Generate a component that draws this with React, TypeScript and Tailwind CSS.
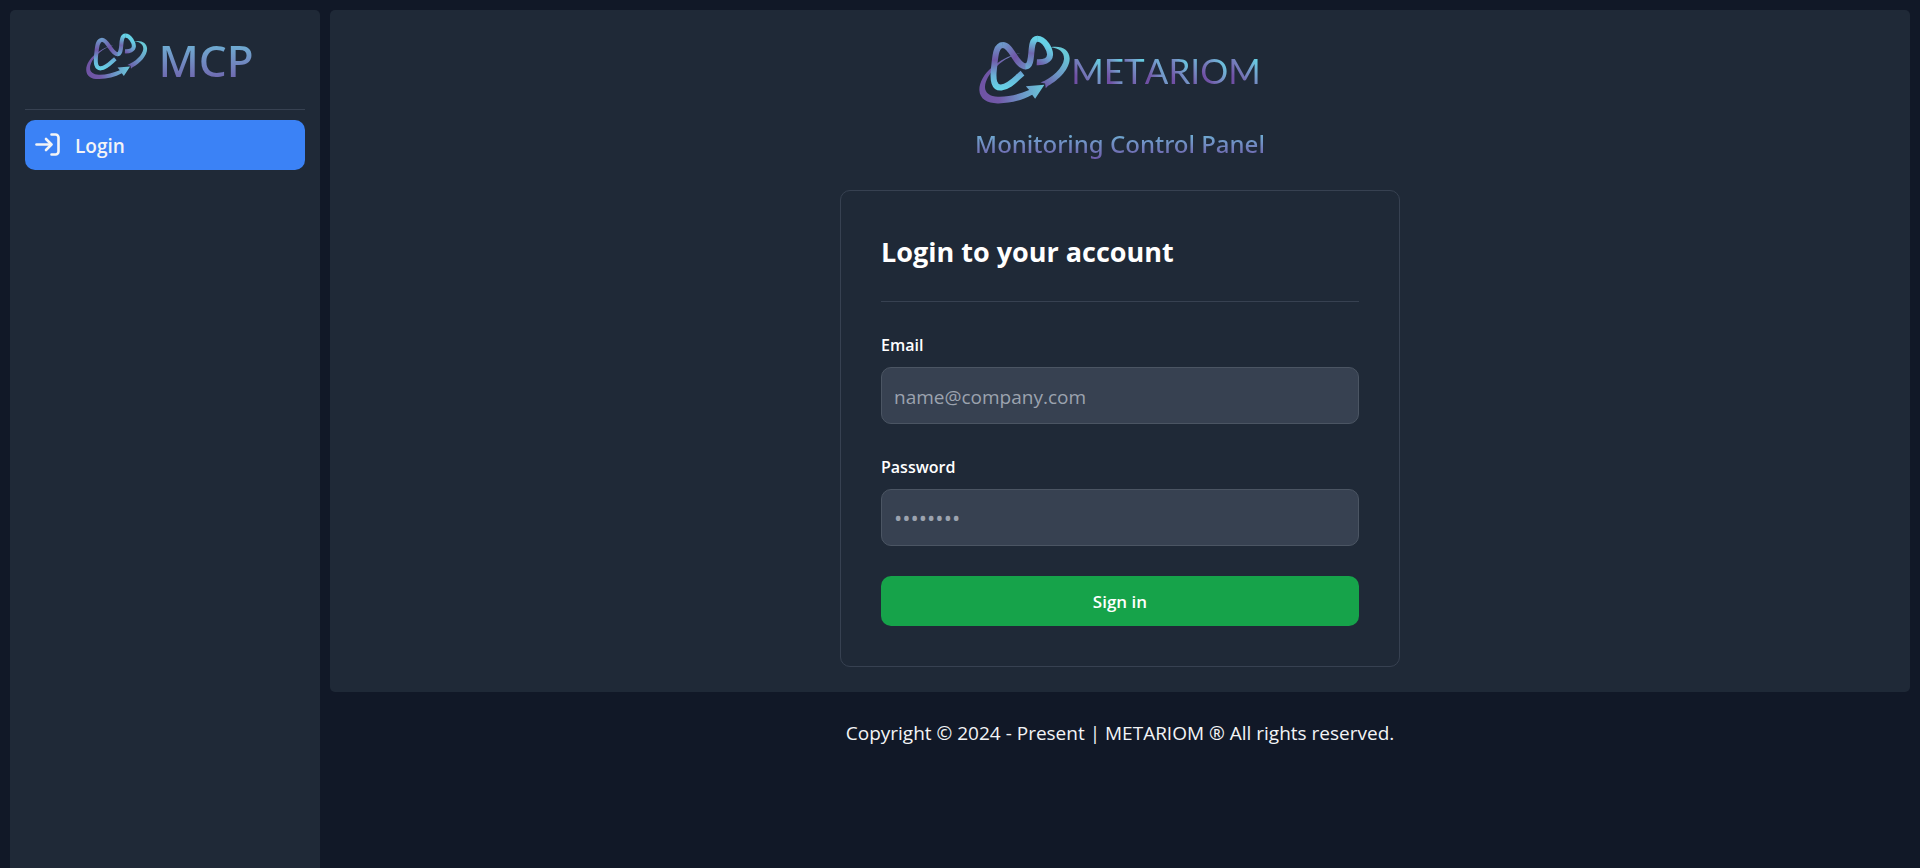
import { useId } from "react";

function LogoMark({ className }: { className: string }) {
  const id = useId();
  const g = (name: string) => `${id}-${name}`;
  const url = (name: string) => `url(#${id}-${name})`;
  return (
    <svg viewBox="35 27 277 210" className={className} aria-hidden="true" fill="none">
      <defs>
        <linearGradient id={g("orbit")} gradientUnits="userSpaceOnUse" x1="50" y1="200" x2="225" y2="190">
          <stop offset="0" stopColor="#6f54a5" />
          <stop offset="0.25" stopColor="#7259a8" />
          <stop offset="0.65" stopColor="#6c97c8" />
          <stop offset="1" stopColor="#69c4d8" />
        </linearGradient>
        <linearGradient id={g("tail")} gradientUnits="userSpaceOnUse" x1="228" y1="180" x2="300" y2="90">
          <stop offset="0" stopColor="#6c58a6" />
          <stop offset="0.45" stopColor="#6b94c4" />
          <stop offset="1" stopColor="#68c8d6" />
        </linearGradient>
        <linearGradient id={g("left")} gradientUnits="userSpaceOnUse" x1="90" y1="55" x2="90" y2="190">
          <stop offset="0" stopColor="#6d9acb" />
          <stop offset="0.35" stopColor="#7058a8" />
          <stop offset="0.7" stopColor="#69b2d8" />
          <stop offset="1" stopColor="#66d2e6" />
        </linearGradient>
        <linearGradient id={g("mid")} gradientUnits="userSpaceOnUse" x1="105" y1="55" x2="190" y2="125">
          <stop offset="0" stopColor="#6d9acb" />
          <stop offset="0.5" stopColor="#7056a7" />
          <stop offset="1" stopColor="#6d92c6" />
        </linearGradient>
        <linearGradient id={g("rise")} gradientUnits="userSpaceOnUse" x1="190" y1="125" x2="205" y2="40">
          <stop offset="0" stopColor="#6ba6cf" />
          <stop offset="0.25" stopColor="#6c86c0" />
          <stop offset="0.5" stopColor="#6f68ae" />
          <stop offset="1" stopColor="#66d2e6" />
        </linearGradient>
        <linearGradient id={g("fall")} gradientUnits="userSpaceOnUse" x1="240" y1="60" x2="205" y2="112">
          <stop offset="0" stopColor="#66d2e6" />
          <stop offset="0.5" stopColor="#6a9ccb" />
          <stop offset="1" stopColor="#7054a6" />
        </linearGradient>
      </defs>
      <path
        d="M160 81C105 92 36 140 36 193C37 221 62 234 94 233C130 232 165 224 195 207L204 219L232 177L176 181L186 193C155 206 122 214 92 213C68 212 52 202 53 182C56 145 102 96 160 81Z"
        fill={url("orbit")}
      />
      <path
        d="M250 64C284 58 307 72 308 97C309 128 276 162 243 180L236 187L234 173L220 170C255 157 288 126 291 99C292 78 276 67 250 64Z"
        fill={url("tail")}
      />
      <path
        d="M166 142C146 158 128 182 102 185C80 187 76 162 80 128C84 95 84 58 107 57"
        stroke={url("left")}
        strokeWidth="18"
      />
      <path d="M106 57C135 57 145 121 177 122" stroke={url("mid")} strokeWidth="18" />
      <path d="M175 122C204 121 181 39 211 38" stroke={url("rise")} strokeWidth="18" />
      <path d="M210 38C234 38 249 73 249 86C248 104 228 110 209 109" stroke={url("fall")} strokeWidth="18" />
    </svg>
  );
}

function Wordmark() {
  return (
    <span className="flex font-[Lato,sans-serif] text-[35px] leading-10" aria-label="METARIOM">
      {"METARIOM".split("").map((letter, i) => (
        <span
          key={i}
          className="bg-linear-to-tr from-[#7050a5] from-25% to-[#66cde2] to-80% bg-clip-text text-transparent"
        >
          {letter}
        </span>
      ))}
    </span>
  );
}

function LoginIcon() {
  return (
    <svg viewBox="0 0 30 30" className="size-[30px] shrink-0" fill="none" stroke="currentColor" strokeWidth="2.6" strokeLinecap="round" strokeLinejoin="round" aria-hidden="true">
      <path d="M18.5 4.5h4a3 3 0 0 1 3 3v14a3 3 0 0 1-3 3h-4" />
      <path d="M13 9l5.5 5.5-5.5 5.5" />
      <path d="M18 14.5H3.5" />
    </svg>
  );
}

const fieldClass =
  "h-[57px] w-full rounded-[10px] border border-[#4b5563] bg-[#374151] px-3 pt-0.5 text-[19px] text-white placeholder:text-[#9ca3af]";
const labelClass = "mb-2 text-[16px] leading-[27px] font-semibold text-white";

export default function App() {
  return (
    <div className="flex min-h-screen gap-2.5 bg-[#111827] px-2.5 pt-2.5 font-['Open_Sans','Noto_Sans',sans-serif] text-[19px] text-gray-100">
      <aside className="w-[310px] shrink-0 rounded-t-[5px] bg-[#1f2937] px-[15px]">
        <div className="flex h-[100px] items-start justify-center gap-2.5 border-b border-[#374151] pt-5 pl-2.5">
          <LogoMark className="mt-[3px] w-[62px]" />
          <span className="bg-linear-to-b from-[#66cde2] to-[#6b4fa3] bg-clip-text font-['Noto_Sans',sans-serif] text-[44px] leading-[60px] font-medium text-transparent">
            MCP
          </span>
        </div>
        <nav className="pt-2.5">
          <a href="#login" className="flex h-[50px] items-center gap-3 rounded-[10px] bg-[#3b82f6] px-2 font-semibold text-gray-100">
            <LoginIcon />
            <span className="pt-0.5">Login</span>
          </a>
        </nav>
      </aside>

      <div className="min-w-0 flex-1">
        <main className="flex flex-col items-center rounded-[5px] bg-[#1f2937] px-5 pt-[25px] pb-[25px]">
          <div className="flex h-[70px] items-center">
            <LogoMark className="w-[92px]" />
            <Wordmark />
          </div>
          <h1 className="mt-5 bg-linear-to-b from-[#66cde2] to-[#6b4fa3] bg-clip-text pt-px font-['Noto_Sans',sans-serif] text-2xl leading-9 font-medium text-transparent">
            Monitoring Control Panel
          </h1>
          <form className="mt-7 w-full max-w-[560px] rounded-[10px] border border-[#374151] p-10">
            <h2 className="border-b border-[#374151] pb-7 text-[27px] leading-[42px] font-bold text-white">
              Login to your account
            </h2>
            <div className="mt-[30px] flex flex-col">
              <label htmlFor="email" className={labelClass}>Email</label>
              <input id="email" type="email" placeholder="name@company.com" className={fieldClass} />
            </div>
            <div className="mt-[30px] flex flex-col">
              <label htmlFor="password" className={labelClass}>Password</label>
              <input id="password" type="password" placeholder="••••••••" className={`${fieldClass} placeholder:text-[22px]`} />
            </div>
            <button type="submit" className="mt-[30px] h-[50px] w-full rounded-[10px] bg-[#16a34a] pt-0.5 text-[17px] font-semibold text-white">
              Sign in
            </button>
          </form>
        </main>
        <footer className="py-[25px] text-center leading-8">
          Copyright © 2024 - Present | METARIOM ® All rights reserved.
        </footer>
      </div>
    </div>
  );
}
